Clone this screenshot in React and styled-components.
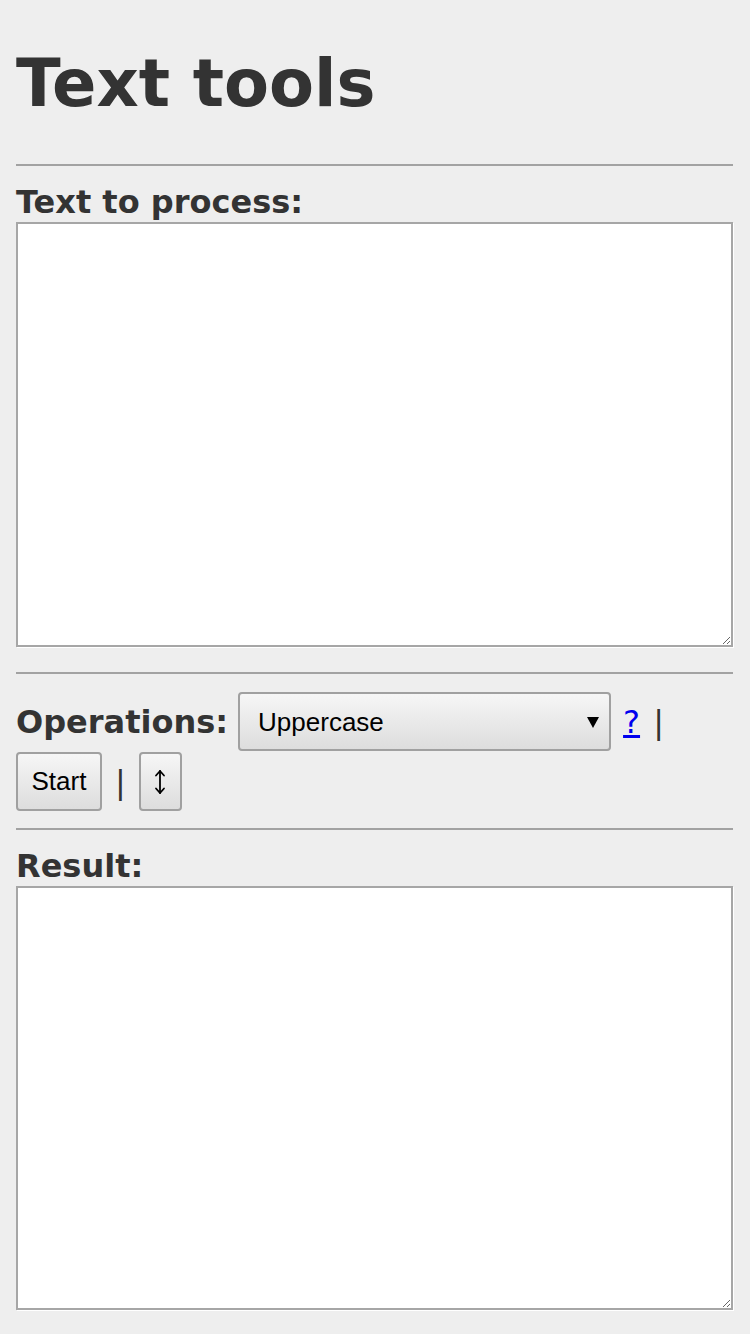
import styled, { createGlobalStyle } from "styled-components"

const GlobalStyle = createGlobalStyle`
  html, body {
    margin: 0;
    padding: 0;
    background: #eeeeee;
  }
  body {
    font-family: "DejaVu Sans", Verdana, sans-serif;
    color: #333333;
  }
`

const Page = styled.div`
  padding: 0 17px 24px 16px;
`

const Title = styled.h1`
  margin: 45px 0 0;
  font-size: 65.5px;
  line-height: 76px;
  font-weight: bold;
  color: #333333;
`

const Rule = styled.hr`
  margin: ${p => p.$top || 18}px 0 0;
  height: 0;
  border: 0;
  border-top: 2px solid #a2a2a2;
`

const Label = styled.label`
  display: block;
  margin-top: 18px;
  font-size: 32px;
  line-height: 36px;
  font-weight: bold;
  color: #333333;
`

const TextBox = styled.textarea`
  display: block;
  box-sizing: border-box;
  width: 100%;
  height: ${p => p.$height}px;
  margin: 2px 0 0;
  border: 2px solid #a6a6a6;
  box-shadow: 1px 1px 0 #ffffff;
  background: #ffffff;
  font-family: "Liberation Mono", monospace;
  font-size: 26px;
  outline: none;
`

const Controls = styled.div`
  display: flex;
  flex-wrap: wrap;
  align-items: center;
  row-gap: 1px;
  margin-top: 18px;
`

const InlineLabel = styled.span`
  font-size: 32px;
  line-height: 36px;
  font-weight: bold;
  margin-right: 10px;
`

const SelectWrap = styled.div`
  position: relative;
  width: 373px;
  height: 59px;

  &::after {
    content: "";
    position: absolute;
    right: 12px;
    top: 25px;
    border-left: 6px solid transparent;
    border-right: 6px solid transparent;
    border-top: 11px solid #000000;
    pointer-events: none;
  }
`

const Select = styled.select`
  appearance: none;
  -webkit-appearance: none;
  box-sizing: border-box;
  width: 100%;
  height: 100%;
  padding: 0 30px 0 18px;
  border: 2px solid #a0a0a0;
  border-radius: 4px;
  background: linear-gradient(#f6f6f6, #dddddd);
  font-family: "Liberation Sans", Arial, sans-serif;
  font-size: 26px;
  color: #000000;
  outline: none;
`

const Help = styled.a`
  margin-left: 12px;
  font-size: 32px;
  line-height: 36px;
  color: #0000ee;
  text-decoration: underline;
`

const Sep = styled.span`
  display: inline-flex;
  justify-content: center;
  width: 37px;
  font-size: 32px;
  line-height: 36px;
  color: #333333;
`

const Button = styled.button`
  display: inline-flex;
  align-items: center;
  justify-content: center;
  box-sizing: border-box;
  height: 59px;
  min-width: ${p => p.$min || 0}px;
  padding: 0 ${p => p.$pad}px;
  border: 2px solid #a0a0a0;
  border-radius: 4px;
  background: linear-gradient(#f6f6f6, #dddddd);
  font-family: "Liberation Sans", Arial, sans-serif;
  font-size: 26px;
  color: #000000;
`

const SwapIcon = () => (
  <svg width="12" height="26" viewBox="0 0 12 26" fill="none" stroke="#000" strokeWidth="1.8" strokeLinecap="round" strokeLinejoin="round">
    <line x1="6" y1="2" x2="6" y2="24" />
    <polyline points="2,6.5 6,2 10,6.5" />
    <polyline points="2,19.5 6,24 10,19.5" />
  </svg>
)

export default function App() {
  return (
    <Page>
      <GlobalStyle />
      <Title>Text tools</Title>
      <Rule $top={43} />
      <Label htmlFor="src">Text to process:</Label>
      <TextBox id="src" $height={425} />
      <Rule $top={25} />
      <Controls>
        <InlineLabel>Operations:</InlineLabel>
        <SelectWrap>
          <Select defaultValue="upper">
            <option value="upper">Uppercase</option>
            <option value="lower">Lowercase</option>
            <option value="title">Title case</option>
            <option value="reverse">Reverse</option>
          </Select>
        </SelectWrap>
        <Help href="#">?</Help>
        <Sep>|</Sep>
        <Button $pad={13.5}>Start</Button>
        <Sep>|</Sep>
        <Button $pad={0} $min={43} aria-label="Swap">
          <SwapIcon />
        </Button>
      </Controls>
      <Rule $top={17} />
      <Label htmlFor="dst">Result:</Label>
      <TextBox id="dst" $height={424} />
    </Page>
  )
}
